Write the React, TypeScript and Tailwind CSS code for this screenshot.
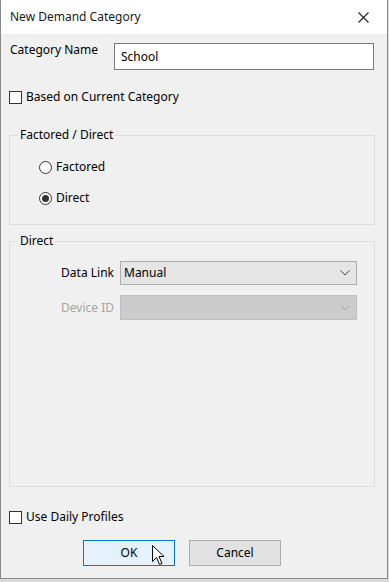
import type { ReactNode } from "react";

const font = { fontFamily: '"Noto Sans", "Open Sans", Arial, sans-serif' };

function CheckBox({ label }: { label: string }) {
  return (
    <label className="flex items-center gap-[4px] text-[12px] leading-[16px] text-black">
      <span className="block h-[13px] w-[13px] border border-[#333333] bg-white" />
      {label}
    </label>
  );
}

function Radio({ label, checked }: { label: string; checked?: boolean }) {
  return (
    <label className="flex items-center gap-[4px] text-[12px] leading-[16px] text-black">
      <span className="flex h-[13px] w-[13px] items-center justify-center rounded-full border border-[#333333] bg-white">
        {checked && <span className="block h-[7px] w-[7px] rounded-full bg-[#333333]" />}
      </span>
      {label}
    </label>
  );
}

function GroupBox({ title, className, children }: { title: string; className: string; children: ReactNode }) {
  return (
    <fieldset className={`border border-[#dcdcdc] ${className}`}>
      <legend className="ml-[8px] px-[2px] text-[12px] leading-[16px] text-black">{title}</legend>
      {children}
    </fieldset>
  );
}

function Chevron({ color }: { color: string }) {
  return (
    <svg width="10" height="6" viewBox="0 0 10 6" fill="none">
      <path d="M0.5 0.5 L5 5 L9.5 0.5" stroke={color} strokeWidth="1" />
    </svg>
  );
}

export default function App() {
  return (
    <div className="relative h-[582px] w-[389px] overflow-hidden bg-[#d9d9d9]" style={font}>
      <div className="flex h-[579px] w-[388px] flex-col border-x border-b border-[#8a8a8a] bg-[#f0f0f0]">
        <div className="flex h-[34px] shrink-0 items-center justify-between bg-white pl-[9px] pr-[18px]">
          <span className="text-[12px] text-[#1a1a1a]">New Demand Category</span>
          <svg width="11" height="11" viewBox="0 0 11 11" fill="none">
            <path d="M0.5 0.5 L10.5 10.5 M10.5 0.5 L0.5 10.5" stroke="#222222" strokeWidth="1.1" />
          </svg>
        </div>

        <div className="flex flex-1 flex-col pl-[8px] pr-[12px]">
          <div className="mt-[9px] flex items-start">
            <span className="ml-[1px] mt-[-1px] text-[12px] leading-[16px] text-black">Category Name</span>
            <div className="ml-auto mr-[1px] flex h-[27px] w-[260px] items-center border border-[#7a7a7a] bg-white pl-[6px] text-[12px] text-black">
              School
            </div>
          </div>

          <div className="mt-[19px]">
            <CheckBox label="Based on Current Category" />
          </div>

          <GroupBox title="Factored / Direct" className="mt-[22px] h-[98px]">
            <div className="flex flex-col gap-[15px] pl-[29px] pt-[16px]">
              <Radio label="Factored" />
              <Radio label="Direct" checked />
            </div>
          </GroupBox>

          <GroupBox title="Direct" className="mt-[8px] h-[254px]">
            <div className="grid grid-cols-[104px_237px] items-center gap-x-[6px] gap-y-[10px] pt-[12px]">
              <span className="text-right text-[12px] leading-[16px] text-black">Data Link</span>
              <div className="flex h-[24px] items-center justify-between border border-[#adadad] bg-[#e5e5e5] pl-[3px] pr-[6px] text-[12px] text-black">
                Manual
                <Chevron color="#444444" />
              </div>
              <span className="text-right text-[12px] leading-[16px] text-[#a3a3a3]">Device ID</span>
              <div className="flex h-[25px] items-center justify-end border border-[#bfbfbf] bg-[#cccccc] pr-[6px]">
                <Chevron color="#a6a6a6" />
              </div>
            </div>
          </GroupBox>

          <div className="mt-[22px]">
            <CheckBox label="Use Daily Profiles" />
          </div>

          <div className="mt-[15px] flex gap-[14px] pl-[74px]">
            <button className="h-[26px] w-[92px] border border-[#0078d7] bg-[#e5f1fb] text-[12px] text-black">OK</button>
            <button className="h-[26px] w-[92px] border border-[#adadad] bg-[#e1e1e1] text-[12px] text-black">Cancel</button>
          </div>
        </div>
      </div>

      <svg className="absolute left-[152px] top-[545px]" width="13" height="21" viewBox="0 0 13 21">
        <path d="M0.5 0.5 L0.5 16.5 L4.5 12.5 L7.5 19.5 L10 18.5 L7 11.5 L12 11.5 Z" fill="#ffffff" stroke="#000000" strokeWidth="1" strokeLinejoin="round" />
      </svg>
    </div>
  );
}
